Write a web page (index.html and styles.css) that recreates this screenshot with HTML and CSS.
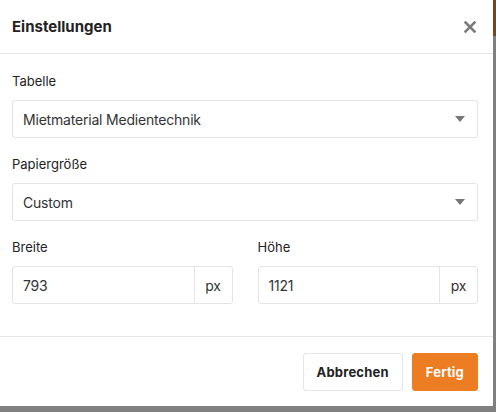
FILE: index.html
```html
<!DOCTYPE html>
<html lang="de">
<head>
<meta charset="utf-8">
<title>Einstellungen</title>
<link rel="stylesheet" href="styles.css">
</head>
<body>
<div class="backdrop">
  <div class="modal">
    <div class="modal-header">
      <h1 class="modal-title">Einstellungen</h1>
      <button class="close" aria-label="Schließen">
        <svg width="12" height="12" viewBox="0 0 12 12"><path d="M1.5 1.5 L10.5 10.5 M10.5 1.5 L1.5 10.5" stroke="#7a7a7a" stroke-width="2.5" stroke-linecap="square" fill="none"/></svg>
      </button>
    </div>
    <div class="modal-body">
      <div class="field">
        <div class="label">Tabelle</div>
        <div class="select">
          <span>Mietmaterial Medientechnik</span>
          <span class="caret"></span>
        </div>
      </div>
      <div class="field">
        <div class="label">Papiergröße</div>
        <div class="select">
          <span>Custom</span>
          <span class="caret"></span>
        </div>
      </div>
      <div class="row">
        <div class="field">
          <div class="label">Breite</div>
          <div class="input-group">
            <span class="input">793</span>
            <span class="addon">px</span>
          </div>
        </div>
        <div class="field">
          <div class="label">Höhe</div>
          <div class="input-group">
            <span class="input">1121</span>
            <span class="addon">px</span>
          </div>
        </div>
      </div>
    </div>
    <div class="modal-footer">
      <button class="btn btn-secondary">Abbrechen</button>
      <button class="btn btn-primary">Fertig</button>
    </div>
  </div>
</div>
</body>
</html>
```
FILE: styles.css
```css
* { box-sizing: border-box; }
html, body { margin: 0; padding: 0; }
body {
  background: #808080;
  font-family: Inter, "Liberation Sans", sans-serif;
  color: #222;
  width: 496px;
  height: 412px;
  overflow: hidden;
}
.backdrop {
  position: relative;
  height: 412px;
}
.backdrop::before {
  content: "";
  position: absolute;
  right: 0;
  top: 0;
  width: 3px;
  height: 36px;
  background: #7a4519;
}
.modal {
  width: 493px;
  height: 406px;
  background: #fff;
  display: flex;
  flex-direction: column;
}
.modal-header {
  height: 54px;
  border-bottom: 1px solid #e6e6e6;
  display: flex;
  align-items: center;
  justify-content: space-between;
  padding: 0 17px 0 12px;
}
.modal-title {
  margin: 0;
  font-size: 15px;
  font-weight: 700;
  color: #222;
}
.close {
  border: 0;
  background: none;
  padding: 0;
  width: 12px;
  height: 12px;
  display: flex;
}
.modal-body {
  flex: 1;
  padding: 17px 15px 0 12px;
}
.field { margin-bottom: 16px; }
.label {
  font-size: 13px;
  line-height: 20px;
  margin-bottom: 9px;
  color: #222;
}
.select, .input-group {
  height: 38px;
  border: 1px solid #e3e3e8;
  border-radius: 3px;
  display: flex;
  align-items: center;
  font-size: 14px;
  letter-spacing: -0.2px;
  color: #333;
}
.select {
  justify-content: space-between;
  padding: 0 12px 0 10px;
}
.caret {
  width: 0;
  height: 0;
  border-left: 5px solid transparent;
  border-right: 5px solid transparent;
  border-top: 6px solid #777;
}
.row {
  display: grid;
  grid-template-columns: 1fr 1fr;
  column-gap: 25px;
}
.input {
  flex: 1;
  padding-left: 10px;
}
.addon {
  width: 38px;
  height: 100%;
  border-left: 1px solid #e3e3e8;
  display: flex;
  align-items: center;
  justify-content: center;
}
.modal-footer {
  height: 70px;
  border-top: 1px solid #e6e6e6;
  display: flex;
  align-items: center;
  justify-content: flex-end;
  gap: 9px;
  padding: 0 15px 0 12px;
}
.btn {
  height: 38px;
  border-radius: 3px;
  font-family: inherit;
  font-size: 13px;
  font-weight: 700;
  letter-spacing: 0.2px;
  padding: 0 13px;
  cursor: pointer;
}
.btn-secondary {
  background: #fff;
  border: 1px solid #e3e3e8;
  color: #222;
}
.btn-primary {
  background: #ed7d22;
  border: 1px solid #ed7d22;
  color: #fff;
}
```
